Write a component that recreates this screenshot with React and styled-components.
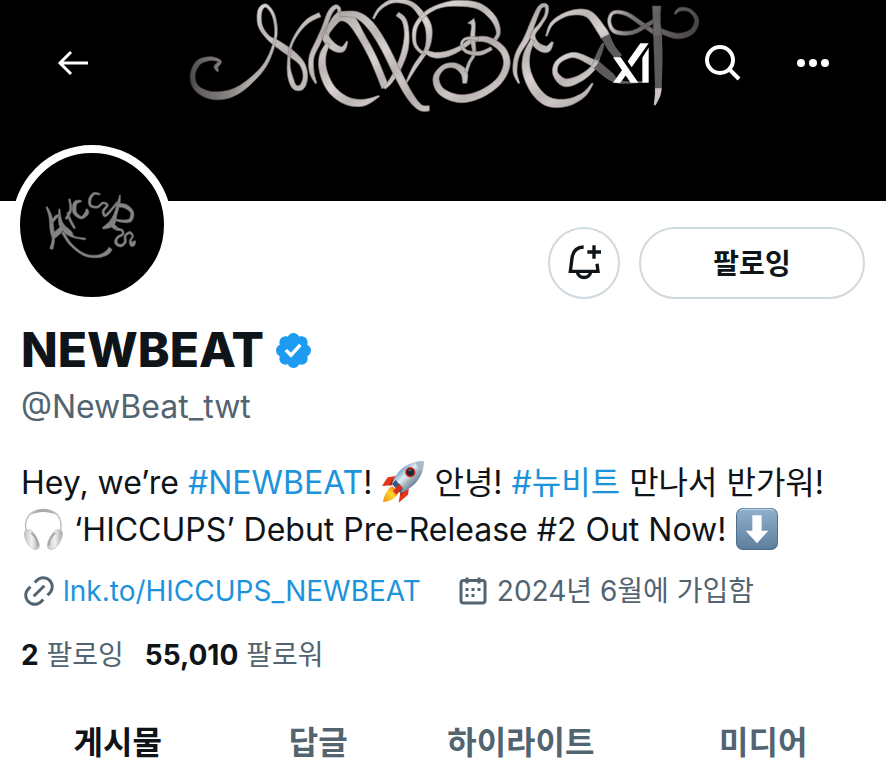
import React from "react";
import styled, { createGlobalStyle, css } from "styled-components";

const ink = "#0f1419";
const muted = "#536471";
const blue = "#1d93dc";

const GlobalStyle = createGlobalStyle`
  * { box-sizing: border-box; }
  body {
    margin: 0;
    background: #fff;
    color: ${ink};
    font-family: Inter, "Noto Sans CJK KR", sans-serif;
  }
  button { font: inherit; color: inherit; cursor: pointer; }
`;

/* Builds a closed outline for a brush stroke from [x, y, width] points. */
function ribbon(points) {
  const samples = [];
  const at = (i) => points[Math.max(0, Math.min(points.length - 1, i))];
  for (let i = 0; i < points.length - 1; i++) {
    for (let s = 0; s < 8; s++) {
      const t = s / 8;
      samples.push(
        [0, 1, 2].map((k) => {
          const [a, b, c, d] = [at(i - 1)[k], at(i)[k], at(i + 1)[k], at(i + 2)[k]];
          return (
            0.5 *
            (2 * b + (c - a) * t + (2 * a - 5 * b + 4 * c - d) * t * t + (3 * b - a - 3 * c + d) * t * t * t)
          );
        })
      );
    }
  }
  samples.push(points[points.length - 1]);
  const left = [];
  const right = [];
  samples.forEach(([x, y, w], i) => {
    const p = samples[Math.max(0, i - 1)];
    const n = samples[Math.min(samples.length - 1, i + 1)];
    const len = Math.hypot(n[0] - p[0], n[1] - p[1]) || 1;
    const nx = ((n[1] - p[1]) / len) * (w / 2);
    const ny = ((n[0] - p[0]) / len) * (w / 2);
    left.push(`${(x + nx).toFixed(1)} ${(y - ny).toFixed(1)}`);
    right.unshift(`${(x - nx).toFixed(1)} ${(y + ny).toFixed(1)}`);
  });
  return `M${left.concat(right).join("L")}Z`;
}

const logoStrokes = [
  [[114,214,5],[108,200,12],[120,184,8],[90,176,12],[55,188,15],[38,225,15],[48,262,17],[85,284,22],[130,286,24],[175,270,20],[220,235,15],[255,195,11],[278,145,8],[288,95,8],[280,45,9],[258,17,10],[240,32,13],[240,75,13],[262,110,12],[290,130,20],[330,158,22],[365,190,16],[376,228,14],[366,260,16],[345,262,15],[332,235,15],[326,195,9],[332,140,7],[355,95,9],[385,62,13],[420,44,14]],
  [[408,250,5],[395,215,14],[395,170,15],[415,125,16],[432,85,14],[450,38,14],[468,20,12],[478,32,10],[465,58,10],[445,85,16],[437,112,22],[460,140,22],[487,148,16],[502,124,4]],
  [[444,130,12],[428,168,20],[430,215,23],[455,268,25],[500,302,24],[550,308,20],[598,288,4]],
  [[440,100,12],[475,52,26],[512,60,28],[545,110,22],[580,175,22],[616,262,22]],
  [[612,264,10],[630,246,12],[655,205,16],[675,150,18],[680,100,14],[672,60,14],[652,42,14]],
  [[480,42,14],[530,45,20],[570,75,24],[610,135,24],[650,215,24],[688,285,22],[720,322,18],[748,325,16]],
  [[680,246,5],[705,200,12],[735,158,12]],
  [[580,56,6],[600,25,9],[640,3,12],[690,10,14],[722,40,18],[745,80,20],[745,130,15],[730,158,10],[706,135,10],[703,95,12],[715,65,12],[740,38,12],[780,18,12],[830,10,18],[895,18,19],[940,55,18],[955,98,12],[940,125,10]],
  [[732,152,10],[762,165,17],[800,162,17],[840,145,14],[880,120,14],[925,120,18],[968,150,20],[980,195,20],[955,245,20],[900,283,22],[840,296,24],[785,275,22],[768,235,18],[790,202,14],[825,197,16],[852,218,20],[854,250,12]],
  [[873,62,24],[880,75,12],[878,115,14],[882,160,10],[868,188,9],[858,216,10]],
  [[935,145,10],[900,160,12],[860,155,10],[845,133,8],[858,116,8],[895,116,10]],
  [[1017,250,5],[1005,215,12],[1012,165,14],[1040,115,17],[1060,65,15],[1080,22,12],[1099,18,11],[1098,45,9],[1080,75,10],[1058,105,15],[1070,135,19],[1100,148,20],[1118,126,6]],
  [[1058,120,12],[1040,165,20],[1040,215,25],[1065,270,28],[1105,305,28],[1160,308,22],[1210,285,14],[1238,250,5]],
  [[1099,108,5],[1118,68,10],[1168,40,14],[1225,42,22],[1266,92,28],[1276,110,28]],
  [[1252,175,14],[1238,205,16],[1200,235,20],[1155,248,24],[1126,220,16],[1135,185,14],[1180,165,16],[1232,185,20],[1252,200,22]],
  [[1430,102,14],[1390,75,13],[1340,42,12],[1300,38,10],[1288,65,10],[1305,95,12],[1355,98,12],[1400,76,12],[1440,50,10]],
  [[1430,88,14],[1490,108,17],[1535,95,15],[1550,60,13],[1530,32,10],[1500,28,11],[1484,42,6]],
  [[1430,18,26],[1430,60,22],[1433,110,26]],
  [[1435,262,20],[1433,285,16],[1424,315,5]],
].map(ribbon);

const dimStrokes = [
  [[1276,108,28],[1295,145,24],[1318,172,22]],
  [[1270,130,8],[1262,150,14],[1250,180,16]],
  [[1250,195,26],[1290,228,24],[1320,246,10],[1390,246,5]],
  [[1433,108,26],[1435,180,25],[1435,265,20]],
].map(ribbon);

const avatarStrokes = [
  [[142,202,5],[153,230,9],[158,270,12],[162,300,8],[156,328,10]],
  [[180,208,4],[182,240,9],[190,262,16],[210,280,16],[225,292,5],[258,298,6]],
  [[156,250,6],[170,232,9],[182,225,4]],
  [[160,292,14],[178,276,16],[192,262,10]],
  [[190,278,8],[215,315,7],[255,345,7],[295,350,8],[322,340,12],[334,326,12]],
  [[205,218,5],[212,240,7],[226,266,6]],
  [[210,178,5],[214,210,7],[200,238,7]],
  [[246,184,5],[228,190,11],[226,218,11],[246,234,8],[262,220,12],[262,208,5]],
  [[302,164,5],[284,162,7],[272,178,8],[274,198,7],[295,202,6],[310,190,6],[324,196,6],[312,214,7],[318,228,7],[338,208,6],[354,188,6]],
  [[362,166,3],[358,190,8],[348,225,10],[336,252,18],[310,266,5]],
  [[350,196,10],[378,200,12],[398,218,10],[392,242,10],[365,244,7],[340,238,5]],
  [[332,246,8],[345,262,12],[362,270,4]],
  [[350,268,7],[368,272,6],[370,284,6],[354,294,7],[350,310,8],[364,318,8],[377,308,7],[378,288,6],[392,279,7],[400,290,5],[393,303,6],[399,314,14],[408,304,5]],
].map(ribbon);

const Page = styled.main`
  min-width: 0;
  background: #fff;
`;

const Banner = styled.header`
  position: relative;
  height: 201px;
  background: #000;
  overflow: hidden;
`;

const BannerArt = styled.svg`
  position: absolute;
  top: 0;
  left: 50%;
  width: 520px;
  height: 120px;
  margin-left: -263px;
`;

const TopBar = styled.nav`
  position: relative;
  display: flex;
  align-items: center;
  gap: 56px;
  height: 126px;
  padding: 0 57px 0 55px;
  color: #fff;
`;

const IconButton = styled.button`
  display: grid;
  place-items: center;
  padding: 0;
  border: 0;
  background: none;
  ${(p) => p.$pushRight && css`margin-right: auto;`}
`;

const Profile = styled.section`
  padding: 0 21px;
`;

const ActionRow = styled.div`
  display: flex;
  align-items: center;
  gap: 19px;
  height: 124px;
`;

const Avatar = styled.div`
  position: relative;
  align-self: flex-start;
  width: 160px;
  height: 160px;
  margin: -56px auto 0 -9px;
  border: 8px solid #fff;
  border-radius: 50%;
  background: #000;
  overflow: hidden;
`;

const OutlineButton = styled.button`
  display: grid;
  place-items: center;
  width: ${(p) => (p.$wide ? "226px" : "72px")};
  height: 72px;
  padding: 0 0 3px;
  border: 2px solid #cfd9de;
  border-radius: 36px;
  background: #fff;
  font-size: 28px;
  font-weight: 700;
`;

const NameRow = styled.div`
  display: flex;
  align-items: center;
  gap: 9px;
  height: 50px;
`;

const Name = styled.h1`
  margin: 0;
  font-size: 48px;
  line-height: 50px;
  font-weight: 800;
`;

const Handle = styled.p`
  margin: 12px 0 0;
  color: ${muted};
  font-size: 32px;
  line-height: 40px;
`;

const Bio = styled.p`
  margin: 32px 0 0;
  font-size: 32px;
  line-height: 47px;
`;

const Link = styled.a`
  color: ${blue};
  text-decoration: none;
`;

const Emoji = styled.svg`
  width: 44px;
  height: 44px;
  vertical-align: -10px;
`;

const Meta = styled.div`
  display: flex;
  flex-wrap: wrap;
  gap: 0 34px;
  margin-top: 16px;
  color: ${muted};
  font-size: 28px;
  line-height: 44px;
`;

const MetaItem = styled.span`
  display: flex;
  align-items: center;
  gap: 6px;
  white-space: nowrap;
`;

const Stats = styled.div`
  display: flex;
  gap: 21px;
  margin-top: 20px;
  font-size: 28px;
  line-height: 44px;
`;

const Stat = styled.a`
  color: ${muted};
  text-decoration: none;

  strong {
    color: ${ink};
    font-weight: 700;
  }
`;

const Tabs = styled.nav`
  display: grid;
  grid-template-columns: 236fr 166fr 240fr 246fr;
  margin-top: 38px;
`;

const Tab = styled.button`
  height: 56px;
  padding: 0;
  border: 0;
  background: none;
  color: ${(p) => (p.$active ? ink : muted)};
  font-size: 32px;
  font-weight: 700;
  line-height: 56px;
`;

const BannerLogo = () => (
  <BannerArt viewBox="0 0 1560 360" role="img" aria-label="NEWBEAT">
    <defs>
      <linearGradient id="silver" gradientUnits="userSpaceOnUse" x1="0" y1="0" x2="90" y2="130" spreadMethod="reflect">
        <stop offset="0" stopColor="#b2acaa" />
        <stop offset="0.4" stopColor="#cbc5c3" />
        <stop offset="0.6" stopColor="#bbb5b3" />
        <stop offset="1" stopColor="#d8d3d1" />
      </linearGradient>
      <linearGradient id="ends" x1="0" x2="1560" y1="0" y2="0" gradientUnits="userSpaceOnUse">
        <stop offset="0.02" stopColor="#000" stopOpacity="0.6" />
        <stop offset="0.14" stopColor="#000" stopOpacity="0" />
        <stop offset="0.82" stopColor="#000" stopOpacity="0" />
        <stop offset="0.87" stopColor="#000" stopOpacity="0.4" />
        <stop offset="1" stopColor="#000" stopOpacity="0.6" />
      </linearGradient>
    </defs>
    <g fill="url(#silver)" stroke="#86807e" strokeWidth="2">
      {logoStrokes.map((d, i) => <path key={i} d={d} />)}
    </g>
    <rect width="1560" height="360" fill="url(#ends)" />
    <path d={logoStrokes[logoStrokes.length - 1]} fill="#cbc5c3" />
    <g fill="#5c5a5a">
      {dimStrokes.map((d, i) => <path key={i} d={d} />)}
    </g>
  </BannerArt>
);

const AvatarArt = () => (
  <svg width="144" height="144" viewBox="62 40 432 432" role="img" aria-label="HICCUPS">
    <g fill="#858585" stroke="#6a6a6a" strokeWidth="2">
      {avatarStrokes.map((d, i) => <path key={i} d={d} />)}
    </g>
  </svg>
);

const BackIcon = () => (
  <svg width="36" height="36" viewBox="0 0 36 36" fill="none" stroke="currentColor" strokeWidth="3">
    <path d="M33 18H6M16 7 5 18l11 11" />
  </svg>
);

const XaiIcon = () => (
  <svg width="36" height="40" viewBox="42 39 108 120" fill="currentColor">
    <path d="M42 82h23l53 76H95z" />
    <path d="M124 40h25L98 112 86 94z" />
    <path d="M42 158l31-43 11 16-20 27z" />
    <path d="M130 83l19-30v105h-19z" />
  </svg>
);

const SearchIcon = () => (
  <svg width="36" height="36" viewBox="0 0 36 36" fill="none" stroke="currentColor" strokeWidth="4">
    <circle cx="15" cy="15" r="13" />
    <path d="m24 24 10 10" />
  </svg>
);

const MoreIcon = () => (
  <svg width="32" height="8" viewBox="0 0 32 8" fill="currentColor">
    <circle cx="4" cy="4" r="4" />
    <circle cx="16" cy="4" r="4" />
    <circle cx="28" cy="4" r="4" />
  </svg>
);

const BellPlusIcon = () => (
  <svg width="36" height="36" viewBox="78 88 108 108" fill="none" stroke="currentColor" strokeWidth="10">
    <path d="M131 97c-24 1-33 15-35 34l-5 39h83l-3-23M112 172c3 22 37 22 40 0M162 92v40M142 112h41" />
  </svg>
);

const VerifiedIcon = () => (
  <svg width="41" height="41" viewBox="0 0 22 22" fill="#1d9bf0" role="img" aria-label="인증된 계정">
    <path d="M20.396 11c-.018-.646-.215-1.275-.57-1.816-.354-.54-.852-.972-1.438-1.246.223-.607.27-1.264.14-1.897-.131-.634-.437-1.218-.882-1.687-.47-.445-1.053-.75-1.687-.882-.633-.13-1.29-.083-1.897.14-.273-.587-.704-1.086-1.245-1.44S11.647 1.62 11 1.604c-.646.017-1.273.213-1.813.568s-.969.854-1.24 1.44c-.608-.223-1.267-.272-1.902-.14-.635.13-1.22.436-1.69.882-.445.47-.749 1.055-.878 1.688-.13.633-.08 1.29.144 1.896-.587.274-1.087.705-1.443 1.245-.356.54-.555 1.17-.574 1.817.02.647.218 1.276.574 1.817.356.54.856.972 1.443 1.245-.224.606-.274 1.263-.144 1.896.13.634.433 1.218.877 1.688.47.443 1.054.747 1.687.878.633.132 1.29.084 1.897-.136.274.586.705 1.084 1.246 1.439.54.354 1.17.551 1.816.569.647-.016 1.276-.213 1.817-.567s.972-.854 1.245-1.44c.604.239 1.266.296 1.903.164.636-.132 1.22-.447 1.68-.907.46-.46.776-1.044.908-1.681s.075-1.299-.165-1.903c.586-.274 1.084-.705 1.439-1.246.354-.54.551-1.17.569-1.816zM9.662 14.85l-3.429-3.428 1.293-1.302 2.072 2.072 4.4-4.794 1.347 1.246z" />
  </svg>
);

const LinkIcon = () => (
  <svg width="36" height="36" viewBox="0 0 24 24" fill="currentColor">
    <path d="M18.36 5.64c-1.95-1.96-5.11-1.96-7.07 0L9.88 7.05 8.46 5.64l1.42-1.42c2.73-2.73 7.16-2.73 9.9 0 2.73 2.74 2.73 7.17 0 9.9l-1.42 1.42-1.41-1.42 1.41-1.41c1.96-1.96 1.96-5.12 0-7.07zm-2.12 3.53l-7.07 7.07-1.41-1.41 7.07-7.07 1.41 1.41zm-12.02.71l1.42-1.42 1.41 1.42-1.41 1.41c-1.96 1.96-1.96 5.12 0 7.07 1.95 1.96 5.11 1.96 7.07 0l1.41-1.41 1.42 1.41-1.42 1.42c-2.73 2.73-7.16 2.73-9.9 0-2.73-2.74-2.73-7.17 0-9.9z" />
  </svg>
);

const CalendarIcon = () => (
  <svg width="36" height="36" viewBox="0 0 24 24" fill="currentColor">
    <path d="M7 4V3h2v1h6V3h2v1h1.500C19.890 4 21 5.120 21 6.500v12c0 1.380-1.110 2.500-2.500 2.500h-13C4.120 21 3 19.880 3 18.500v-12C3 5.120 4.120 4 5.500 4H7zm0 2H5.500c-.27 0-.5.22-.5.5v12c0 .28.23.5.5.5h13c.28 0 .5-.22.5-.5v-12c0-.28-.22-.5-.5-.5H17v1h-2V6H9v1H7V6zm0 6h2v-2H7v2zm0 4h2v-2H7v2zm4-4h2v-2h-2v2zm0 4h2v-2h-2v2zm4-4h2v-2h-2v2z" />
  </svg>
);

const Rocket = () => (
  <Emoji viewBox="0 0 132 132" role="img" aria-label="로켓">
    <defs>
      <linearGradient id="hull" x1="0.200" y1="0.200" x2="0.800" y2="0.800">
        <stop offset="0" stopColor="#4b86b8" />
        <stop offset="0.4" stopColor="#e4edf4" />
        <stop offset="0.65" stopColor="#9eabb5" />
        <stop offset="1" stopColor="#4c6f90" />
      </linearGradient>
      <linearGradient id="flame" x1="1" y1="0" x2="0" y2="1">
        <stop offset="0" stopColor="#f04a12" />
        <stop offset="0.5" stopColor="#ffd52e" />
        <stop offset="1" stopColor="#f08a18" />
      </linearGradient>
    </defs>
    <path d="M44 48 20 52 3 78l28-2zM84 82l-3 22-28 24 5-32z" fill="#e5361b" />
    <path d="M44 48 30 65l-4 12 12-4zM84 82 66 98l-8 12 2-17z" fill="#a91b13" />
    <path d="M35 79C20 84 9 104 6 126c22-1 40-11 47-29z" fill="url(#flame)" />
    <path d="M33 72C43 36 77 4 128 3c2 43-26 80-70 96z" fill="url(#hull)" />
    <path d="M101 7c9-3 18-4 27-4 0 12-2 22-7 32z" fill="#a9bac9" />
    <path d="m33 72 25 27 8-13-22-26z" fill="#31597e" />
    <path d="m37 93 18-22 10 12-19 21z" fill="#d92d1c" />
    <circle cx="88" cy="37" r="15" fill="#b61d17" />
    <circle cx="88" cy="37" r="10" fill="#17273a" />
    <path d="M82 34c2-4 7-6 10-3-4 0-7 1-10 3z" fill="#a8d4ef" />
  </Emoji>
);

const Headphones = () => (
  <Emoji viewBox="0 0 132 132" role="img" aria-label="헤드폰">
    <defs>
      <linearGradient id="cup">
        <stop offset="0" stopColor="#c2c2c5" />
        <stop offset="0.5" stopColor="#f1f1f2" />
        <stop offset="1" stopColor="#a7a7ab" />
      </linearGradient>
    </defs>
    <path d="M18 82C3 35 29 7 67 7s64 28 49 75" fill="none" stroke="#b9b9bc" strokeWidth="4" />
    <path d="M30 23C49 1 85 1 104 23 83 12 51 12 30 23z" fill="#aaaaad" />
    <path d="M17 69c16-6 28 16 35 34 7 17 0 26-11 24-17-4-29-27-31-45-1-7 2-11 7-13z" fill="url(#cup)" stroke="#b4b4b8" strokeWidth="2" />
    <path d="M117 69c-16-6-28 16-35 34-7 17 0 26 11 24 17-4 29-27 31-45 1-7-2-11-7-13z" fill="url(#cup)" stroke="#b4b4b8" strokeWidth="2" />
    <path d="M31 78c10 7 20 24 20 38M103 78c-10 7-20 24-20 38" fill="none" stroke="#a2a2a7" strokeWidth="5" />
  </Emoji>
);

const DownArrow = () => (
  <Emoji viewBox="0 0 132 132" role="img" aria-label="아래쪽 화살표">
    <defs>
      <linearGradient id="key" x1="0" y1="0" x2="0" y2="1">
        <stop offset="0" stopColor="#8fb0cd" />
        <stop offset="1" stopColor="#607f9e" />
      </linearGradient>
    </defs>
    <rect x="3" y="3" width="126" height="126" rx="21" fill="#4e6f8f" />
    <rect x="6" y="5" width="120" height="120" rx="19" fill="url(#key)" />
    <path d="M15 11q5-4 12-4h78q8 0 13 4" fill="none" stroke="#c5dbea" strokeWidth="3" />
    <path d="M52 25h28v46h20l-34 38-34-38h20z" fill="#fff" />
  </Emoji>
);

export default function App() {
  return (
    <Page>
      <GlobalStyle />
      <Banner>
        <BannerLogo />
        <TopBar aria-label="상단 메뉴">
          <IconButton $pushRight aria-label="뒤로"><BackIcon /></IconButton>
          <IconButton aria-label="xAI"><XaiIcon /></IconButton>
          <IconButton aria-label="검색"><SearchIcon /></IconButton>
          <IconButton aria-label="더 보기"><MoreIcon /></IconButton>
        </TopBar>
      </Banner>

      <Profile>
        <ActionRow>
          <Avatar><AvatarArt /></Avatar>
          <OutlineButton aria-label="알림 켜기"><BellPlusIcon /></OutlineButton>
          <OutlineButton $wide>팔로잉</OutlineButton>
        </ActionRow>
        <NameRow>
          <Name>NEWBEAT</Name>
          <VerifiedIcon />
        </NameRow>
        <Handle>@NewBeat_twt</Handle>
        <Bio>
          Hey, we’re <Link href="#newbeat">#NEWBEAT</Link>! <Rocket /> 안녕!{" "}
          <Link href="#뉴비트">#뉴비트</Link> 만나서 반가워!
          <br />
          <Headphones /> ‘HICCUPS’ Debut Pre-Release #2 Out Now! <DownArrow />
        </Bio>
        <Meta>
          <MetaItem>
            <LinkIcon />
            <Link href="#link">lnk.to/HICCUPS_NEWBEAT</Link>
          </MetaItem>
          <MetaItem>
            <CalendarIcon />
            2024년 6월에 가입함
          </MetaItem>
        </Meta>
        <Stats>
          <Stat href="#following"><strong>2</strong> 팔로잉</Stat>
          <Stat href="#followers"><strong>55,010</strong> 팔로워</Stat>
        </Stats>
      </Profile>

      <Tabs aria-label="프로필 탭">
        <Tab $active aria-current="page">게시물</Tab>
        <Tab>답글</Tab>
        <Tab>하이라이트</Tab>
        <Tab>미디어</Tab>
      </Tabs>
    </Page>
  );
}
